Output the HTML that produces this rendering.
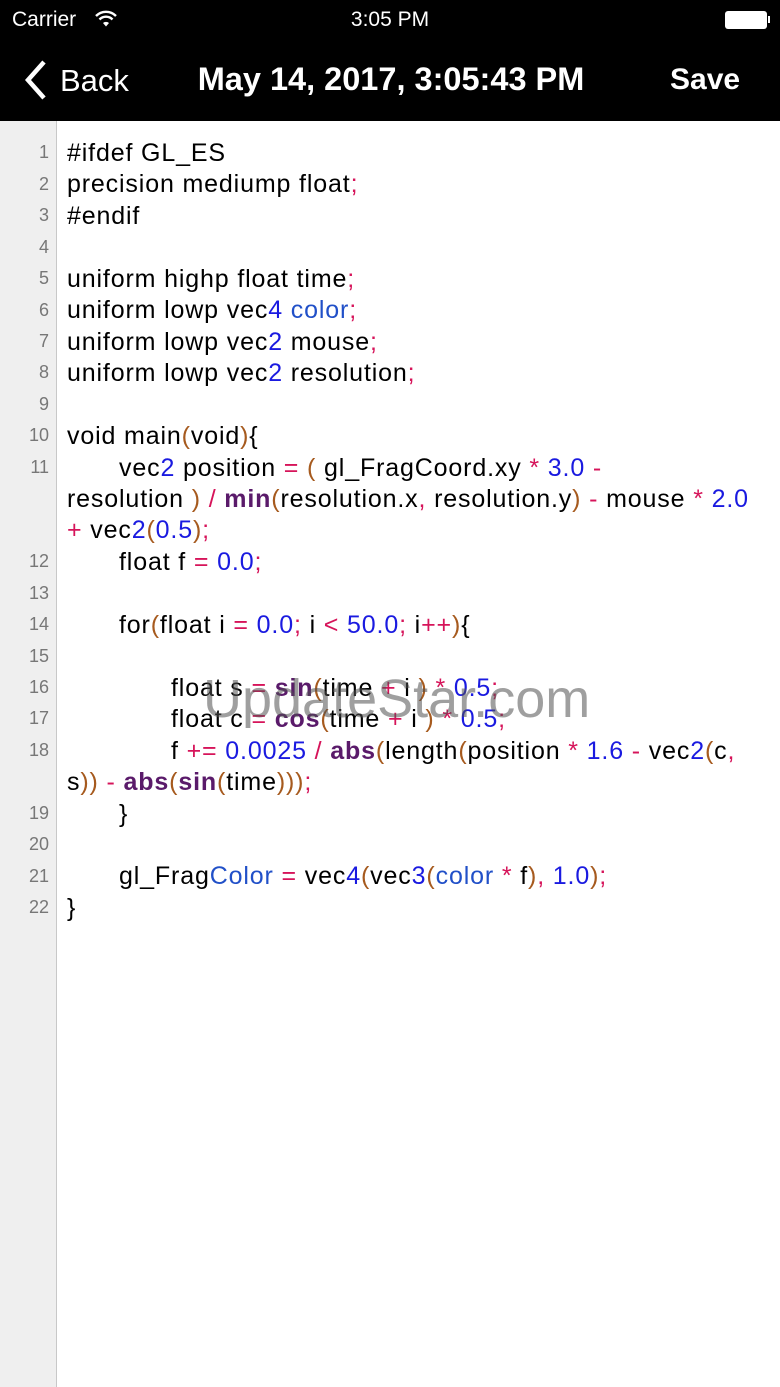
<!DOCTYPE html>
<html><head><meta charset="utf-8"><style>
*{margin:0;padding:0;box-sizing:border-box}
body{width:780px;height:1387px;background:#fff;font-family:"Liberation Sans",Arial,sans-serif;position:relative;overflow:hidden}
.bar{position:absolute;left:0;top:0;width:780px;height:121px;background:#000;color:#fff}
.gut{position:absolute;left:0;top:121px;width:57px;height:1266px;background:#efefef;border-right:1px solid #c8c8c8}
.nums{position:absolute;left:0;top:137.3px;width:49px;text-align:right;font-size:18px;line-height:31.45px;color:#777}
.code{position:absolute;left:67px;top:138px;font-size:25px;letter-spacing:0.85px;line-height:31.45px;color:#000;white-space:pre}
.i1{display:inline-block;width:52px}.i2{display:inline-block;width:104px}
.o{color:#d6145a}.n{color:#1a1ae0}.p{color:#a65a1e}.k{color:#5a1a6a;font-weight:bold}.c{color:#2150c8}
.wm{position:absolute;left:203px;top:668px;font-size:54px;color:rgba(80,80,80,.55)}
</style></head><body>
<div class="bar">
<div style="position:absolute;left:12px;top:8px;font-size:21px">Carrier</div>
<svg style="position:absolute;left:94px;top:10px" width="24" height="18" viewBox="0 0 24 18"><path d="M2 6 A14 14 0 0 1 22 6" stroke="#fff" stroke-width="2.4" fill="none"/><path d="M5.5 9.5 A9 9 0 0 1 18.5 9.5" stroke="#fff" stroke-width="2.4" fill="none"/><path d="M9 13 A4.5 4.5 0 0 1 15 13 L12 16.5Z" fill="#fff"/></svg>
<div style="position:absolute;left:0;width:780px;text-align:center;top:8px;font-size:21px">3:05 PM</div>
<div style="position:absolute;left:725px;top:11px;width:42px;height:18px;border-radius:3px;background:#fff"></div>
<div style="position:absolute;left:768px;top:16px;width:2px;height:7px;background:#fff"></div>
<svg style="position:absolute;left:22px;top:60px" width="28" height="40" viewBox="0 0 28 40"><path d="M22 2 L6 20 L22 38" stroke="#fff" stroke-width="4.5" fill="none"/></svg>
<div style="position:absolute;left:60px;top:63px;font-size:31px">Back</div>
<div style="position:absolute;left:0;width:780px;text-align:center;top:61px;font-size:32.5px;font-weight:bold;padding-left:2px">May 14, 2017, 3:05:43 PM</div>
<div style="position:absolute;left:670px;top:63px;font-size:30px;font-weight:bold">Save</div>
</div>
<div class="gut"></div>
<div class="nums">1<br>2<br>3<br>4<br>5<br>6<br>7<br>8<br>9<br>10<br>11<br><br><br>12<br>13<br>14<br>15<br>16<br>17<br>18<br><br>19<br>20<br>21<br>22</div>
<div class="code">#ifdef GL_ES
precision mediump float<span class="o">;</span>
#endif

uniform highp float time<span class="o">;</span>
uniform lowp vec<span class="n">4</span> <span class="c">color</span><span class="o">;</span>
uniform lowp vec<span class="n">2</span> mouse<span class="o">;</span>
uniform lowp vec<span class="n">2</span> resolution<span class="o">;</span>

void main<span class="p">(</span>void<span class="p">)</span>{
<span class="i1"></span>vec<span class="n">2</span> position <span class="o">=</span> <span class="p">(</span> gl_FragCoord.xy <span class="o">*</span> <span class="n">3.0</span> <span class="o">-</span>
resolution <span class="p">)</span> <span class="o">/</span> <span class="k">min</span><span class="p">(</span>resolution.x<span class="o">,</span> resolution.y<span class="p">)</span> <span class="o">-</span> mouse <span class="o">*</span> <span class="n">2.0</span>
<span class="o">+</span> vec<span class="n">2</span><span class="p">(</span><span class="n">0.5</span><span class="p">)</span><span class="o">;</span>
<span class="i1"></span>float f <span class="o">=</span> <span class="n">0.0</span><span class="o">;</span>

<span class="i1"></span>for<span class="p">(</span>float i <span class="o">=</span> <span class="n">0.0</span><span class="o">;</span> i <span class="o">&lt;</span> <span class="n">50.0</span><span class="o">;</span> i<span class="o">++</span><span class="p">)</span>{

<span class="i2"></span>float s <span class="o">=</span> <span class="k">sin</span><span class="p">(</span>time <span class="o">+</span> i <span class="p">)</span> <span class="o">*</span> <span class="n">0.5</span><span class="o">;</span>
<span class="i2"></span>float c <span class="o">=</span> <span class="k">cos</span><span class="p">(</span>time <span class="o">+</span> i <span class="p">)</span> <span class="o">*</span> <span class="n">0.5</span><span class="o">;</span>
<span class="i2"></span>f <span class="o">+=</span> <span class="n">0.0025</span> <span class="o">/</span> <span class="k">abs</span><span class="p">(</span>length<span class="p">(</span>position <span class="o">*</span> <span class="n">1.6</span> <span class="o">-</span> vec<span class="n">2</span><span class="p">(</span>c<span class="o">,</span>
s<span class="p">))</span> <span class="o">-</span> <span class="k">abs</span><span class="p">(</span><span class="k">sin</span><span class="p">(</span>time<span class="p">)))</span><span class="o">;</span>
<span class="i1"></span>}

<span class="i1"></span>gl_Frag<span class="c">Color</span> <span class="o">=</span> vec<span class="n">4</span><span class="p">(</span>vec<span class="n">3</span><span class="p">(</span><span class="c">color</span> <span class="o">*</span> f<span class="p">)</span><span class="o">,</span> <span class="n">1.0</span><span class="p">)</span><span class="o">;</span>
}</div>
<div class="wm">UpdateStar.com</div>
</body></html>
